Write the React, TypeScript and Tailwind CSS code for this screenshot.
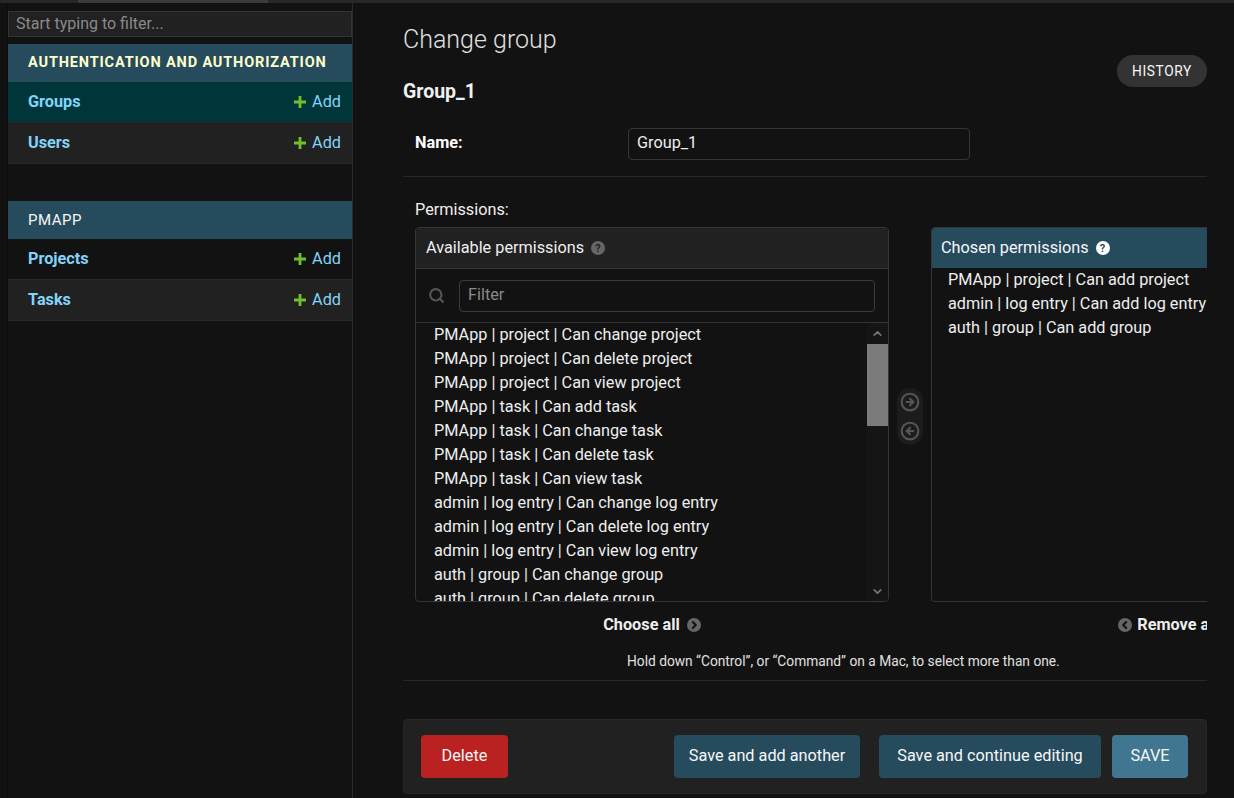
import { Search, CircleArrowRight, CircleArrowLeft, ChevronUp, ChevronDown } from 'lucide-react'

const available = [
  'PMApp | project | Can change project',
  'PMApp | project | Can delete project',
  'PMApp | project | Can view project',
  'PMApp | task | Can add task',
  'PMApp | task | Can change task',
  'PMApp | task | Can delete task',
  'PMApp | task | Can view task',
  'admin | log entry | Can change log entry',
  'admin | log entry | Can delete log entry',
  'admin | log entry | Can view log entry',
  'auth | group | Can change group',
  'auth | group | Can delete group',
  'auth | group | Can view group',
]

const chosen = [
  'PMApp | project | Can add project',
  'admin | log entry | Can add log entry',
  'auth | group | Can add group',
]

function AddLink() {
  return (
    <a className="flex items-center gap-[6px] text-[16.25px] text-[#81d4fa]">
      <svg width="12" height="12" viewBox="0 0 12 12">
        <path d="M4.6 0h2.8v4.6H12v2.8H7.4V12H4.6V7.4H0V4.6h4.6z" fill="#70bf2b" />
      </svg>
      Add
    </a>
  )
}

function ModelRow({ name, bg, h }: { name: string; bg: string; h: string }) {
  return (
    <div className={`flex items-center justify-between pl-[20px] pr-[11px] border-b border-[#272727] ${bg} ${h}`}>
      <a className="text-[16.25px] font-bold text-[#81d4fa]">{name}</a>
      <AddLink />
    </div>
  )
}

function HelpIcon({ light }: { light?: boolean }) {
  return (
    <span
      className={`ml-[7px] inline-flex h-[14px] w-[14px] items-center justify-center rounded-full text-[11px] font-bold leading-none ${
        light ? 'bg-white text-[#264b5d]' : 'bg-[#666666] text-[#212121]'
      }`}
    >
      ?
    </span>
  )
}

function ChevronCircle({ dir }: { dir: 'left' | 'right' }) {
  return (
    <svg width="14" height="14" viewBox="0 0 14 14" className="flex-none">
      <circle cx="7" cy="7" r="7" fill="#666666" />
      <path
        d={dir === 'right' ? 'M5.8 4l3 3-3 3' : 'M8.2 4l-3 3 3 3'}
        fill="none"
        stroke="#121212"
        strokeWidth="2"
        strokeLinecap="round"
        strokeLinejoin="round"
      />
    </svg>
  )
}

export default function App() {
  return (
    <div className="h-[798px] w-[1234px] overflow-hidden bg-[#121212] font-['Roboto',sans-serif] text-[#eeeeee]">
      <div className="flex h-[3px] bg-[#26262b]">
        <div className="ml-[78px] w-[190px] bg-[#3a3a41]" />
      </div>
      <div className="flex h-[795px]">
        <div className="w-[8px] border-r border-[#0b0b0b]" />

        {/* Sidebar */}
        <aside className="w-[345px] flex-none border-r border-[#2a2a2a] pt-[8px]">
          <div className="flex h-[26px] items-center border border-[#333333] bg-[#212121] pl-[7px] text-[16px] text-[#8a8a8a]">
            Start typing to filter...
          </div>

          <div className="mt-[7px]">
            <div className="flex h-[38px] items-center whitespace-nowrap bg-[#264b5d] pl-[20px] text-[14.5px] font-bold uppercase tracking-[0.85px] text-[#ffffcc]">
              Authentication and Authorization
            </div>
            <ModelRow name="Groups" bg="bg-[#00363a]" h="h-[41px]" />
            <ModelRow name="Users" bg="bg-[#212121]" h="h-[41px]" />
          </div>

          <div className="mt-[37px]">
            <div className="flex h-[38px] items-center bg-[#264b5d] pl-[20px] text-[15px] tracking-[0.5px] text-[#f7f7f7]">
              PMAPP
            </div>
            <ModelRow name="Projects" bg="bg-[#121212]" h="h-[41px]" />
            <ModelRow name="Tasks" bg="bg-[#212121]" h="h-[41px]" />
          </div>
        </aside>

        {/* Main content */}
        <main className="flex-1 pl-[50px]">
          <div className="w-[804px] overflow-hidden">
            <div className="flex items-start justify-between pt-[22px]">
              <div>
                <h1 className="text-[25px] font-light leading-[30px] text-[#e0e0e0]">Change group</h1>
                <h2 className="mt-[25px] text-[19.5px] font-bold leading-[24px] text-[#f0f0f0]">Group_1</h2>
              </div>
              <a className="mt-[30px] flex h-[32px] w-[90px] items-center justify-center rounded-full bg-[#333333] text-[13.75px] uppercase tracking-[0.6px] text-[#f7f7f7]">
                History
              </a>
            </div>

            {/* Name */}
            <div className="mt-[7px] flex h-[66px] items-center border-b border-[#272727] pl-[12px]">
              <label className="w-[213px] text-[16.25px] font-bold text-white">Name:</label>
              <div className="flex h-[32px] w-[342px] items-center rounded-[4px] border border-[#353535] pl-[8px] text-[16.25px] text-[#eeeeee]">
                Group_1
              </div>
            </div>

            {/* Permissions */}
            <div className="border-b border-[#272727] pb-[10px] pt-[23px]">
              <div className="pl-[12px] text-[16.25px] leading-[20px] text-[#eeeeee]">Permissions:</div>

              <div className="ml-[12px] mt-[7px] flex w-[1000px]">
                {/* Available */}
                <div className="flex h-[375px] w-[474px] flex-none flex-col overflow-hidden rounded-[4px] border border-[#353535]">
                  <div className="flex h-[41px] flex-none items-center border-b border-[#353535] bg-[#212121] pl-[10px] text-[16.25px]">
                    Available permissions
                    <HelpIcon />
                  </div>
                  <div className="flex h-[54px] flex-none items-center border-b border-[#353535] pl-[12px] pr-[13px]">
                    <Search size={17} strokeWidth={3} className="text-[#555555]" />
                    <div className="ml-[14px] flex h-[32px] flex-1 items-center rounded-[4px] border border-[#3a3a3a] pl-[8px] text-[16.25px] text-[#8a8a8a]">
                      Filter
                    </div>
                  </div>
                  <div className="flex min-h-0 flex-1">
                    <ul className="flex-1 overflow-hidden pl-[18px] text-[16.25px] leading-[24px]">
                      {available.map((p) => (
                        <li key={p} className="h-[24px] whitespace-nowrap">
                          {p}
                        </li>
                      ))}
                    </ul>
                    <div className="flex w-[21px] flex-none flex-col bg-[#151515]">
                      <div className="flex h-[21px] items-center justify-center">
                        <ChevronUp size={13} strokeWidth={3} className="text-[#777777]" />
                      </div>
                      <div className="h-[82px] bg-[#7b7b7b]" />
                      <div className="flex-1" />
                      <div className="flex h-[20px] items-center justify-center">
                        <ChevronDown size={13} strokeWidth={3} className="text-[#777777]" />
                      </div>
                    </div>
                  </div>
                </div>

                {/* Move buttons */}
                <div className="flex w-[42px] flex-none items-center justify-center">
                  <div className="mt-[4px] flex flex-col items-center gap-[9px] rounded-[13px] bg-[#1c1c1c] px-[3px] py-[4px]">
                    <CircleArrowRight size={20} strokeWidth={2.5} className="text-[#555555]" />
                    <CircleArrowLeft size={20} strokeWidth={2.5} className="text-[#555555]" />
                  </div>
                </div>

                {/* Chosen */}
                <div className="flex h-[375px] w-[474px] flex-none flex-col overflow-hidden rounded-[4px] border border-[#353535]">
                  <div className="flex h-[40px] flex-none items-center bg-[#264b5d] pl-[9px] text-[16.25px] text-[#f7f7f7]">
                    Chosen permissions
                    <HelpIcon light />
                  </div>
                  <ul className="pl-[16px] text-[16.25px] leading-[24px]">
                    {chosen.map((p) => (
                      <li key={p} className="h-[24px] whitespace-nowrap">
                        {p}
                      </li>
                    ))}
                  </ul>
                </div>
              </div>

              <div className="ml-[12px] mt-[13px] flex w-[1000px] text-[16.25px] font-bold leading-[20px] text-[#eeeeee]">
                <div className="flex w-[474px] items-center justify-center gap-[7px] whitespace-nowrap">
                  Choose all
                  <ChevronCircle dir="right" />
                </div>
                <div className="w-[42px]" />
                <div className="flex w-[474px] items-center justify-center gap-[5px] whitespace-nowrap">
                  <ChevronCircle dir="left" />
                  Remove all
                </div>
              </div>

              <div className="mt-[18px] pl-[224px] text-[13.75px] leading-[17px] text-[#e0e0e0]">
                Hold down “Control”, or “Command” on a Mac, to select more than one.
              </div>
            </div>

            {/* Submit row */}
            <div className="mt-[38px] flex items-center rounded-[4px] border border-[#272727] bg-[#212121] py-[15px] pl-[17px] pr-[18px] text-[16.25px] text-[#f7f7f7]">
              <a className="flex h-[43px] w-[87px] items-center justify-center rounded-[4px] bg-[#ba2121]">Delete</a>
              <div className="ml-auto flex">
                <button className="h-[43px] w-[186px] rounded-[4px] bg-[#264b5d]">Save and add another</button>
                <button className="ml-[19px] h-[43px] w-[222px] rounded-[4px] bg-[#264b5d]">Save and continue editing</button>
                <button className="ml-[11px] h-[43px] w-[76px] rounded-[4px] bg-[#417690]">SAVE</button>
              </div>
            </div>
          </div>
        </main>
      </div>
    </div>
  )
}
